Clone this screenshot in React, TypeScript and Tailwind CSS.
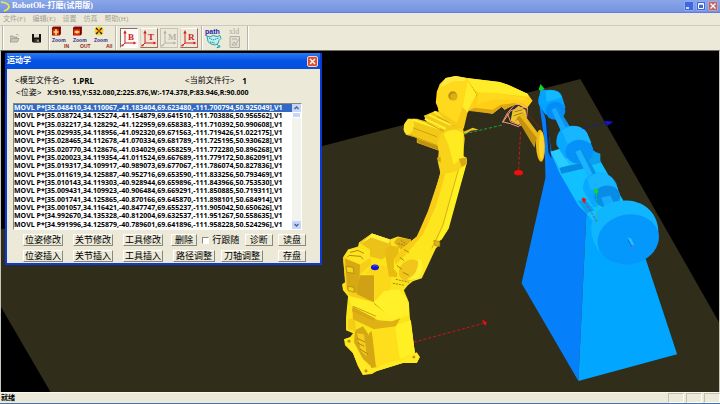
import React, { useState } from 'react';

const CJK = "font-['Liberation_Sans','Noto_Sans_CJK_SC',sans-serif]";
const SERIF = "font-['Liberation_Serif','Noto_Sans_CJK_SC',serif]";
const DATA = "font-['Open_Sans','Liberation_Sans',sans-serif]";

const menus = ['文件(F)', '编辑(E)', '设置', '仿真', '帮助(H)'];

const programLines = [
  'MOVL P*[35.048410,34.110067,-41.183404,69.623480,-111.700794,50.925049],V1',
  'MOVL P*[35.038724,34.125274,-41.154879,69.641510,-111.703886,50.956562],V1',
  'MOVL P*[35.032217,34.128292,-41.122959,69.658383,-111.710392,50.990608],V1',
  'MOVL P*[35.029935,34.118956,-41.092320,69.671563,-111.719426,51.022175],V1',
  'MOVL P*[35.028465,34.112678,-41.070334,69.681789,-111.725195,50.930628],V1',
  'MOVL P*[35.020770,34.128676,-41.034029,69.658259,-111.772280,50.896268],V1',
  'MOVL P*[35.020023,34.119354,-41.011524,69.667689,-111.779172,50.862091],V1',
  'MOVL P*[35.019317,34.109917,-40.989073,69.677067,-111.786074,50.827836],V1',
  'MOVL P*[35.011619,34.125887,-40.952716,69.653590,-111.833256,50.793469],V1',
  'MOVL P*[35.010143,34.119303,-40.928944,69.659896,-111.843966,50.753530],V1',
  'MOVL P*[35.009431,34.109923,-40.906484,69.669291,-111.850885,50.719311],V1',
  'MOVL P*[35.001741,34.125865,-40.870166,69.645870,-111.898101,50.684914],V1',
  'MOVL P*[35.001057,34.116421,-40.847747,69.655237,-111.905042,50.650626],V1',
  'MOVL P*[34.992670,34.135328,-40.812004,69.632537,-111.951267,50.558635],V1',
  'MOVL P*[34.991996,34.125879,-40.789601,69.641896,-111.958228,50.524296],V1',
];

const Separator = () => (
  <div className="h-full w-[2px] shrink-0 border-l border-[#b9b6a6] bg-white" />
);

const TitleBar = () => (
  <header className="flex h-[13px] items-center border-b border-[#5f7fe6] bg-gradient-to-b from-[#8aa6ea] to-[#7593dd] pr-[2px]">
    <svg viewBox="0 0 12 12" className="h-3 w-3 shrink-0" aria-hidden="true">
      <path d="M1 2 Q9 3 9 7 Q8 10 4 11" fill="none" stroke="#f2f032" strokeWidth="1.6" />
    </svg>
    <h1 className={`flex-1 text-[8px] leading-[12px] font-bold whitespace-nowrap text-white ${SERIF}`}>
      RobotOle-打磨(试用版)
    </h1>
    <div className="flex gap-[2px]">
      <button aria-label="最小化" className="h-[10px] w-[10px] rounded-[1px] border border-[#90a8ee] bg-[#3f68df]">
        <svg viewBox="0 0 8 8" className="block h-2 w-2"><path d="M1 6h3" stroke="#fff" strokeWidth="1.5" /></svg>
      </button>
      <button aria-label="最大化" className="h-[10px] w-[10px] rounded-[1px] border border-[#90a8ee] bg-[#3f68df]">
        <svg viewBox="0 0 8 8" className="block h-2 w-2">
          <path d="M1.5 1.5h5v5h-5z M1.5 2.2h5" fill="none" stroke="#fff" />
        </svg>
      </button>
      <button aria-label="关闭" className="h-[10px] w-[10px] rounded-[1px] border border-[#c3a0b8] bg-[#b8656c]">
        <svg viewBox="0 0 8 8" className="block h-2 w-2"><path d="M1.5 1.5l5 5M6.5 1.5l-5 5" stroke="#fff" strokeWidth="1.3" /></svg>
      </button>
    </div>
  </header>
);

type ZoomKind = 'IN' | 'OUT' | 'All';

const ZoomButton = ({ kind }: { kind: ZoomKind }) => (
  <button aria-label={`Zoom ${kind}`} className="h-6 w-[21px]">
    <svg viewBox="0 0 21 24" className="block h-6 w-[21px] overflow-visible">
      {kind === 'All' ? (
        <>
          <circle cx="5" cy="5" r="4.5" fill="#f2d51c" />
          <path d="M2 2l2 2M8 2L6 4M2 8l2-2M8 8L6 6" stroke="#2a2018" strokeWidth="1.4" />
          <circle cx="5" cy="5" r="1.3" fill="#d33" />
        </>
      ) : (
        <>
          <path d="M0 2l1.5-1.5H9V8L7.5 9.5H0z" fill="#a31212" />
          <path d="M7.5 2v7M0 2h9" stroke="#3a0c0c" strokeWidth=".7" />
          <path d="M1 3.4h6v5.4H1z" fill="#e32a1c" />
          <path d={kind === 'IN' ? 'M4 3v6M1.5 6h5' : 'M1.5 6h5'} stroke="#ffd23c" strokeWidth="1.6" />
          <circle cx="4" cy="6" r="1.5" fill="#ffe36a" />
        </>
      )}
      <text x="0" y="16" fontSize="5" fontWeight="700" fill="#29298c" fontFamily="Liberation Sans, sans-serif">Zoom</text>
      <text x={kind === 'OUT' ? 7 : 12} y="22" fontSize="5" fontWeight="700" fill="#962424" fontFamily="Liberation Sans, sans-serif">{kind}</text>
    </svg>
  </button>
);

const FrameButton = ({ letter, active, disabled, onClick }: {
  letter: string;
  active: boolean;
  disabled?: boolean;
  onClick: () => void;
}) => {
  const color = disabled ? '#b4b2a8' : '#cf2020';
  return (
    <button
      aria-label={`坐标系 ${letter}`}
      aria-pressed={active}
      disabled={disabled}
      onClick={onClick}
      className={`h-5 w-[18px] border ${
        active
          ? 'border-t-[#77756c] border-l-[#77756c] border-r-white border-b-white bg-[#fbfaf6]'
          : disabled
            ? 'border-[#c6c3b6]'
            : 'border-t-white border-l-[#d5d2c4] border-r-[#a06a62] border-b-[#a06a62]'
      }`}
    >
      <svg viewBox="0 0 16 18" className="block h-[18px] w-4">
        <path d="M4 14V3M4 14h10M4 14l-3 3" fill="none" stroke={color} />
        <path d="M4 1L2.3 4.5h3.4zM15.5 14l-3-1.600v3.200zM0 17.500l3-.5-2-2z" fill={color} />
        <text x="7" y="11" fontSize="9" fontWeight="700" fill={color} fontFamily="Liberation Serif, serif">
          {letter}
        </text>
      </svg>
    </button>
  );
};

const ToolBar = () => {
  const [frame, setFrame] = useState('B');
  return (
    <div role="toolbar" className="flex h-[25px] items-center border-t border-[#cbc9c4] bg-[#ece9d8] pl-[2px]">
      <Separator />
      <div className="flex w-11 items-center gap-3 pl-[6px]">
        <button aria-label="打开" className="h-3 w-[10px]">
          <svg viewBox="0 0 10 10" className="block h-[10px] w-[10px]">
            <path d="M0 9V3h3l1 1h3v1.5M0 9l2-3.5h7L7.5 9z" fill="#c9c7bb" stroke="#9d9b91" strokeWidth=".8" />
            <path d="M6 1.5q2-1 2.5 1" fill="none" stroke="#a5a399" strokeWidth=".8" />
          </svg>
        </button>
        <button aria-label="保存" className="h-3 w-[9px]">
          <svg viewBox="0 0 9 10" className="block h-[10px] w-[9px]">
            <path d="M0 1h9v8.5H1L0 8.5z" fill="#14140c" />
            <path d="M2 1h5v3.500H2z" fill="#d9d7cc" />
            <path d="M2.500 6h4.500v3.500H2.500z" fill="#3c3c2e" />
            <path d="M5.500 6.800h1v2h-1z" fill="#e6e4d8" />
          </svg>
        </button>
      </div>
      <Separator />
      <div className="flex pl-[2px]">
        <ZoomButton kind="IN" />
        <ZoomButton kind="OUT" />
        <ZoomButton kind="All" />
      </div>
      <Separator />
      <div className="flex items-center gap-[2px] px-[3px]">
        {['B', 'T', 'M', 'R'].map((letter) => (
          <FrameButton
            key={letter}
            letter={letter}
            active={frame === letter}
            disabled={letter === 'M'}
            onClick={() => setFrame(letter)}
          />
        ))}
      </div>
      <Separator />
      <div className="flex gap-1 pr-[2px] pl-[2px]">
        <button aria-label="path" className="h-6 w-[18px]">
          <svg viewBox="0 0 18 24" className="block h-6 w-[18px] overflow-visible">
            <text x="0" y="8" fontSize="7" fontWeight="700" fill="#1d1da8" fontFamily="Liberation Sans, sans-serif">path</text>
            <path d="M2 10l3 1 3-1.500 4 1 3-1 1 3-2 2-1 3-3 1.500-4-1-3-2.500z" fill="#c6eeee" stroke="#25a7ac" />
            <path d="M4 12l4 2 6-2M5 16l5 1M12 18l2 3-3 1" fill="none" stroke="#1e8fa6" strokeDasharray="1.500 .7" />
            <circle cx="14" cy="20.500" r="1.400" fill="#36b7b0" />
          </svg>
        </button>
        <button aria-label="xld" disabled className="h-6 w-[18px]">
          <svg viewBox="0 0 18 24" className="block h-6 w-[18px] overflow-visible">
            <text x="2" y="8" fontSize="8" fill="#aaa89d" fontFamily="Liberation Serif, serif">xld</text>
            <path d="M3 10.500h9.500v11H3z" fill="#e2dfd0" stroke="#b1afa3" />
            <path d="M5 13h5M5 19l2-3 2 2 3-5M5 19h5" fill="none" stroke="#b1afa3" />
          </svg>
        </button>
      </div>
      <Separator />
    </div>
  );
};

const Floor = () => (
  <g>
    <path d="M-4 230L581 78L724 329V396H52L-4 300z" fill="#302d1b" />
    <g stroke="#3a3724" strokeWidth=".6" strokeDasharray="1 3" fill="none">
      <path d="M322 202L550 149M430 272L530 244M322 312L530 262M150 360L346 310M440 390L570 358" />
      <path d="M350 145L400 230M450 285L505 392M100 262L165 392" />
    </g>
  </g>
);

const Grinder = () => (
  <g>
    {/* pedestal */}
    <path d="M539 98L547 120L552 150L560 170L587 213L579 381L522 283L546 177L545 140z" fill="#0680fa" />
    <path d="M587 213L612 180L647 260L678 354L579 381z" fill="#00a6ff" />
    <path d="M546 116L548 120L552 158L549 152z" fill="#0a2c50" />
    {/* bench top */}
    <path d="M551 151L560 148L595 150L624 200L600 228L587 213L579 205L560 172z" fill="#10c0ff" />
    <path d="M560 167L592 160L592 166L562 173z" fill="#058be0" />
    <path d="M590 149L601 153L601 162L590 165z" fill="#0aa0f0" />
    <path d="M551 151L560 149L570 164L560 167z" fill="#2accff" />
    <path d="M578 200L587 213L595 210L588 201z" fill="#08a0ee" />
    {/* spindle, back to front */}
    <path d="M541 89h5v5h-6z" fill="#1a9cf2" />
    <path d="M539 103C538 93 543 89 550 89C558 89 562 92 563 97L566 107L546 114z" fill="#03a4ff" />
    <path d="M546 90C555 88 561 91 562 97L547 101z" fill="#14b8ff" />
    <ellipse cx="556" cy="110" rx="10" ry="9" fill="#048cf6" />
    <path d="M552 109L558 106L571 127L563 134z" fill="#16a9ff" />
    <path d="M556 107L558 106L571 127L568 130z" fill="#0791ee" />
    <path d="M557 144C556 131 563 125 573 125C582 125 588 130 589 136L594 149L566 158z" fill="#08a8ff" />
    <path d="M562 130C570 123 584 124 588 133L592 142L568 143z" fill="#17b6ff" />
    <ellipse cx="580" cy="151" rx="14" ry="12" fill="#0591f8" />
    <path d="M576 151L584 148L597 173L589 178z" fill="#1ab3ff" />
    <path d="M581 149L584 148L597 173L594 175z" fill="#0891ea" />
    <path d="M584 190C582 179 590 172 600 172C609 172 614 177 617 183L621 196L594 207z" fill="#09a9ff" />
    <path d="M588 178C597 169 611 172 615 181L619 189L591 189z" fill="#17b5ff" />
    <ellipse cx="608" cy="196" rx="13" ry="11" fill="#078de6" />
    <path d="M602 197L611 195L615 203L606 209z" fill="#16aaff" />
    {/* wheel */}
    <path d="M592 232C590 213 606 199 628 200C647 201 661 215 659 236C657 255 640 264 622 264C608 263 595 250 592 232z" fill="#10b6fd" />
    <ellipse cx="629" cy="239" rx="31" ry="25" transform="rotate(-12 629 239)" fill="#0598fc" />
    <path d="M628 237L632 238L635 245L631 244z" fill="#25bfff" />
    <path d="M628 237L629 241L633 247L632 244z" fill="#056ecc" />
    <circle cx="633" cy="247" r="1" fill="#a054d4" />
  </g>
);

const Robot = () => (
  <g>
    {/* base */}
    <path d="M346 317L348 296L343 290L342 284L345 282L343 257L348 249L358 246L359 242L372 233L390 239L398 236L411 239L413 281L408 285L404 290L409 302L410 317L415 352L420 357L417 363L403 363L377 371L372 374L363 375L358 366L353 353L345 345L344 339L350 337L353 333L346 330z" fill="#fae319" />
    <path d="M344 339L350 337L368 366L403 360L417 352L420 357L417 363L403 363L377 371L363 375L358 366L353 353z" fill="#ffe922" />
    <path d="M369 333L372 331L378 367L371 368z" fill="#d6a710" />
    <path d="M372 332L399 322L411 322L415 353L376 367z" fill="#ffdf1b" />
    <path d="M395 325L411 320L415 353L400 359z" fill="#fff023" />
    <path d="M355 330L363 326L371 338L371 366L363 359L354 342z" fill="#d4a815" />
    <path d="M357 333L364 334L367 356L361 351zM348 319L355 318L356 331L348 329z" fill="#f5cc1a" />
    <path d="M357 338l8 4M358 343l6 3M360 349l8 5" stroke="#987610" strokeWidth=".8" />
    <circle cx="349" cy="341" r="1.500" fill="#b98f14" />
    <circle cx="366" cy="371" r="1.500" fill="#b98f14" />
    <circle cx="414" cy="357" r="1.500" fill="#b98f14" />
    <path d="M352 303L385 319L402 315L396 326L374 329L353 319z" fill="#e0b114" />
    <path d="M348 296L367 295L397 308L409 302L409 315L392 321L378 320L352 306z" fill="#ffed25" />
    <path d="M353 307L375 318L374 321L352 311z" fill="#d7a811" />
    <path d="M353 306L376 316M374 303L392 317" stroke="#a98113" strokeWidth=".7" />
    {/* turret */}
    <path d="M343 257L349 249L359 247L370 250L371 264L360 274L374 302L350 296L346 288z" fill="#f6cd17" />
    <path d="M345 258L360 264L359 294L347 289z" fill="#d6a914" />
    <path d="M349 249L358 247L370 250L371 257L360 264L344 257z" fill="#ffe41f" />
    <path d="M347 257l2-2 12 1 2 3M350 252l8-2 6 3" fill="none" stroke="#b48a12" />
    <path d="M346 266L353 267L354 273L347 272zM348 286l6 1v5l-6-2z" fill="#f5d31c" stroke="#a57f14" strokeWidth=".7" />
    <path d="M360 275L382 275L374 302L357 294z" fill="#d0a114" />
    <path d="M370 267L380 265L393 268L391 286L385 297L374 301L374 275L366 273z" fill="#fbd91a" />
    <path d="M359 242L372 233L390 239L393 250L382 259L370 256L370 249z" fill="#ecc118" />
    <path d="M372 233L390 239L389 243L371 237L360 244z" fill="#fff03a" />
    <path d="M385 253C385 246 392 244 399 247L397 277L389 276z" fill="#e8bb13" />
    <path d="M398 237L411 239L414 247L404 252L394 242z" fill="#ddb013" />
    <path d="M398 243l7 2M401 240l6 4M393 283l12 2M396 279l13 3" stroke="#a5801a" strokeDasharray="2 1" />
    <path d="M374 302L384 291L399 289L407 298L409 312L392 319z" fill="#fff02a" />
    <ellipse cx="375" cy="267" rx="4" ry="3" fill="#1414dc" />
    <path d="M373 266q3-2 5 0" fill="none" stroke="#454dff" />
    {/* lower arm */}
    <path d="M441 170L433 200L422 227L417 236L402 249L394 259L394 269L402 278L413 281L422 278L429 263L436 248L440 244L438 238L447 231L452 210L460 186L466 165L467 157L452 150z" fill="#fde61d" />
    <path d="M441 172L447 168L436 206L423 234L407 253L396 264L394 259L402 248L417 236L428 211z" fill="#f8cc17" />
    <path d="M459 162L467 159L466 166L449 228L442 239L436 243L444 224z" fill="#fff11f" />
    <path d="M460 164L443 225L432 248" fill="none" stroke="#c99e17" strokeWidth=".8" />
    <ellipse cx="410" cy="270" rx="10" ry="12" transform="rotate(45 410 270)" fill="#f1c519" />
    <path d="M418 258Q426 261 420 276Q414 281 407 279Q420 273 418 258z" fill="#fff234" />
    <path d="M400 257l4 3M404 249l5 3M397 265l5 4M403 272l6 3" stroke="#9f7d12" strokeWidth=".9" />
    <path d="M434 240l6 1v5l-5-1z" fill="#e0b316" stroke="#a78015" strokeWidth=".6" />
    {/* elbow motor */}
    <path d="M404 124L408 118L417 118L427 121L424 115L436 110L447 115L463 124L464 135L442 151L417 142L417 137L406 134z" fill="#f3c917" />
    <ellipse cx="409" cy="126" rx="5" ry="8" transform="rotate(15 409 126)" fill="#ffe327" />
    <path d="M413 119L440 128M425 118L446 128M429 114L451 124M434 111L456 122" stroke="#fff02f" strokeWidth="2" />
    <path d="M409 134L438 145M413 127L437 136M427 122L445 131M437 116L456 125" stroke="#cda016" />
    <path d="M417 138L440 146V150L418 142z" fill="#be9212" />
    {/* elbow joint */}
    <path d="M439 150Q435 138 445 130L463 127L465 138L463 158L467 158L467 164L455 171L441 174L438 161z" fill="#f8d319" />
    <path d="M444 133Q454 126 463 132L464 156L454 164L449 145z" fill="#ffec20" />
    <path d="M437 157l4-1v6l-3-2zM459 158l7-1 1 6-5 3z" fill="#d6a912" />
    <path d="M440 103L444 83L455 76L468 78L477 94L468 111L464 128L452 124L439 113L437 100z" fill="#f6ca17" />
    <path d="M440 83L446 77L456 75L467 77L471 84L464 104L457 122L440 111L436 102L437 91z" fill="#ffd91c" />
    <path d="M446 77L456 75L467 77L465 80L454 80L440 87z" fill="#ffe842" />
    <path d="M468 80L477 94L468 112L463 106z" fill="#ffed29" />
    <circle cx="453" cy="95" r="4.500" fill="#b98c12" />
    <circle cx="454" cy="96" r="3.600" fill="#ddad15" />
    {/* forearm */}
    <path d="M467 77L500 81L509 84L528 93L533 100L527 108L517 103L505 109L502 106L493 113L475 110L468 110L477 94z" fill="#ffcf17" />
    <path d="M467 77L500 81L509 84L528 93L529 96L494 92L479 92L474 88z" fill="#ffec28" />
    <path d="M479 93L493 92L527 97L525 100L495 98L477 104z" fill="#ffd91e" />
    <path d="M475 107L493 109L501 104L517 102L505 109L502 106L493 113L468 110z" fill="#dca713" />
    <path d="M464 131L473 127L479 129L471 130L465 134z" fill="#f2c21b" />
    {/* wrist and tool */}
    <path d="M513 110L519 105L526 109L527 117L519 124L511 120z" fill="#eec629" />
    <path d="M515 111l8-2M514 115l9-3M516 120l8-7" stroke="#9c7927" />
    <path d="M503 121L508 112L515 104L523 103L528 107L527 117L519 126L511 123zM503 122L511 110L525 106M508 113L511 121L522 125" fill="none" stroke="#f29a80" />
    <path d="M517 117L524 113L538 133L535 147z" fill="#c5920f" />
    <path d="M520 115L524 113L539 133L538 138z" fill="#e9b91b" />
    <ellipse cx="541" cy="145" rx="4.500" ry="16" transform="rotate(-2 541 145)" fill="#edba12" />
    <ellipse cx="542" cy="145" rx="2.500" ry="14" fill="#ffd42c" />
  </g>
);

const Axes = () => (
  <g fill="none">
    <path d="M465 133L504 124" stroke="#15a83a" strokeDasharray="3 2" />
    <path d="M521 131L519 170" stroke="#c81919" strokeDasharray="3 2" />
    <path d="M529 114L540 127" stroke="#9c2020" strokeDasharray="2 1" />
    <ellipse cx="519" cy="172" rx="4.500" ry="2.700" fill="#f30d0d" />
    <path d="M414 342L484 323" stroke="#cf1414" strokeDasharray="3 2" />
    <path d="M482 319l5 3-1 4-2-3z" fill="#e31212" />
    <path d="M583 128L607 122" stroke="#1717ad" strokeDasharray="3 2" />
    <path d="M605 120l9 1-6 4z" fill="#1414d6" />
    <path d="M541 83l4 5-3 2-3-1zM597 187l2 4-2 3-3-3z" fill="#12d62d" />
    <path d="M597 194L598 222" stroke="#28c660" strokeDasharray="2 2" />
    <path d="M584 197l3 2-2 4-3-4z" fill="#e81616" />
    <path d="M586 202L598 222" stroke="#a8355a" strokeDasharray="2 2" />
  </g>
);

const Scene = () => (
  <svg
    viewBox="0 50 720 342"
    preserveAspectRatio="xMidYMid slice"
    className="absolute inset-0 h-full w-full"
    role="img"
    aria-label="机器人打磨仿真"
  >
    <Floor />
    <Grinder />
    <Robot />
    <Axes />
  </svg>
);

const PushButton = ({ label, width = 'w-10' }: { label: string; width?: string }) => (
  <button
    className={`h-3 shrink-0 border border-t-white border-l-white border-r-[#8b8878] border-b-[#8b8878] bg-[#ece9d8] text-[9px] leading-[10px] whitespace-nowrap text-black ${width}`}
  >
    {label}
  </button>
);

const ProgramList = () => {
  const [selected, setSelected] = useState(0);
  return (
    <div className="flex h-[127px] border border-t-[#8b8878] border-l-[#8b8878] border-r-white border-b-white bg-white">
      <ul
        role="listbox"
        aria-label="程序"
        className={`grid min-w-0 flex-1 auto-rows-fr text-[7px] leading-[8px] font-bold ${DATA}`}
      >
        {programLines.map((line, index) => (
          <li
            key={line}
            role="option"
            aria-selected={index === selected}
            onClick={() => setSelected(index)}
            className={`whitespace-nowrap ${index === selected ? 'bg-[#316ac5] text-white' : 'text-black'}`}
          >
            {line}
          </li>
        ))}
      </ul>
      <div className="flex w-[9px] flex-col bg-[#f3f3ee]">
        <button aria-label="向上" className="h-2 rounded-[1px] bg-[#c5d5fb]">
          <svg viewBox="0 0 9 8" className="block h-2 w-[9px]"><path d="M2.500 5l2-2 2 2" fill="none" stroke="#4d6185" strokeWidth="1.300" /></svg>
        </button>
        <div className="h-[6px] rounded-[1px] border border-white bg-[#c5d5fb]" />
        <div className="flex-1" />
        <button aria-label="向下" className="h-2 rounded-[1px] bg-[#c5d5fb]">
          <svg viewBox="0 0 9 8" className="block h-2 w-[9px]"><path d="M2.500 3l2 2 2-2" fill="none" stroke="#4d6185" strokeWidth="1.300" /></svg>
        </button>
      </div>
    </div>
  );
};

const KinematicsDialog = () => (
  <section
    aria-label="运动学"
    className="absolute top-[2px] left-1 w-[317px] border-x-2 border-b-2 border-[#0a3bd6] bg-[#ece9d8]"
  >
    <div className="flex h-4 items-center justify-between bg-gradient-to-b from-[#2a7bf5] via-[#0552e4] to-[#0450dd] pr-[2px]">
      <h2 className="text-[8px] leading-3 font-bold text-white">运动学</h2>
      <button aria-label="关闭对话框" className="h-[11px] w-[11px] rounded-[2px] border border-[#f3d0c4] bg-[#dc5230]">
        <svg viewBox="0 0 9 9" className="block h-[9px] w-[9px]"><path d="M2 2l5 5M7 2L2 7" stroke="#fff" strokeWidth="1.300" /></svg>
      </button>
    </div>
    <div className="pr-[18px] pl-[6px]">
      <div className="flex items-center pt-[6px] pl-[2px] text-[8px] leading-3 whitespace-nowrap">
        <div className="flex w-[170px] gap-2">
          <span>&lt;模型文件名&gt;</span>
          <span className={`font-bold ${DATA}`}>1.PRL</span>
        </div>
        <div className="flex gap-2">
          <span>&lt;当前文件行&gt;</span>
          <span className={`font-bold ${DATA}`}>1</span>
        </div>
      </div>
      <div className="flex gap-[6px] pb-1 pl-[3px] text-[8px] leading-3 whitespace-nowrap">
        <span>&lt;位姿&gt;</span>
        <span className={`text-[7px] font-bold ${DATA}`}>X:910.193,Y:532.080,Z:225.876,W:-174.378,P:83.946,R:90.000</span>
      </div>
      <ProgramList />
    </div>
    <div className="flex flex-col gap-1 pt-1 pr-[14px] pb-[1px] pl-4">
      <div className="flex gap-2">
        <div className="flex gap-[10px]">
          <PushButton label="位姿修改" />
          <PushButton label="关节修改" />
          <PushButton label="工具修改" />
        </div>
        <div className="flex flex-1 items-center justify-between">
          <PushButton label="删除" width="w-[26px]" />
          <label className="flex items-center gap-[3px] text-[9px] leading-3">
            <input
              type="checkbox"
              className="h-[7px] w-[7px] appearance-none border border-t-[#8b8878] border-l-[#8b8878] border-r-white border-b-white bg-white checked:bg-[#316ac5]"
            />
            行跟随
          </label>
          <PushButton label="诊断" width="w-7" />
          <PushButton label="读盘" width="w-7" />
        </div>
      </div>
      <div className="flex gap-[10px]">
        <PushButton label="位姿插入" />
        <PushButton label="关节插入" />
        <PushButton label="工具插入" />
        <div className="flex flex-1 gap-[6px]">
          <PushButton label="路径调整" width="w-[42px]" />
          <PushButton label="刀轴调整" width="w-[42px]" />
          <div className="ml-auto flex">
            <PushButton label="存盘" width="w-7" />
          </div>
        </div>
      </div>
    </div>
  </section>
);

const StatusBar = () => (
  <footer className="flex h-3 justify-between border-t border-b border-t-[#f8f6ec] border-b-[#3b78b8] bg-[#ece9d8] pl-px">
    <span className="text-[7px] leading-[10px] font-bold">就绪</span>
    <div className="flex gap-[2px]">
      {['caps', 'num', 'scroll'].map((pane) => (
        <div key={pane} className="w-4 border border-t-[#c3c0b0] border-l-[#c3c0b0] border-r-white border-b-white" />
      ))}
    </div>
  </footer>
);

export default function App() {
  return (
    <div className={`flex min-h-screen flex-col bg-[#ece9d8] text-black ${CJK}`}>
      <TitleBar />
      <nav className={`flex h-3 items-center gap-[7px] pl-[3px] text-[7px] leading-3 text-[#a3a196] ${SERIF}`}>
        {menus.map((menu) => (
          <button key={menu} className="whitespace-nowrap">{menu}</button>
        ))}
      </nav>
      <ToolBar />
      <main className="relative min-h-[218px] flex-1 overflow-hidden border-x border-t border-x-[#c9c7bb] border-t-[#716f5f] bg-black">
        <Scene />
        <KinematicsDialog />
      </main>
      <StatusBar />
    </div>
  );
}
